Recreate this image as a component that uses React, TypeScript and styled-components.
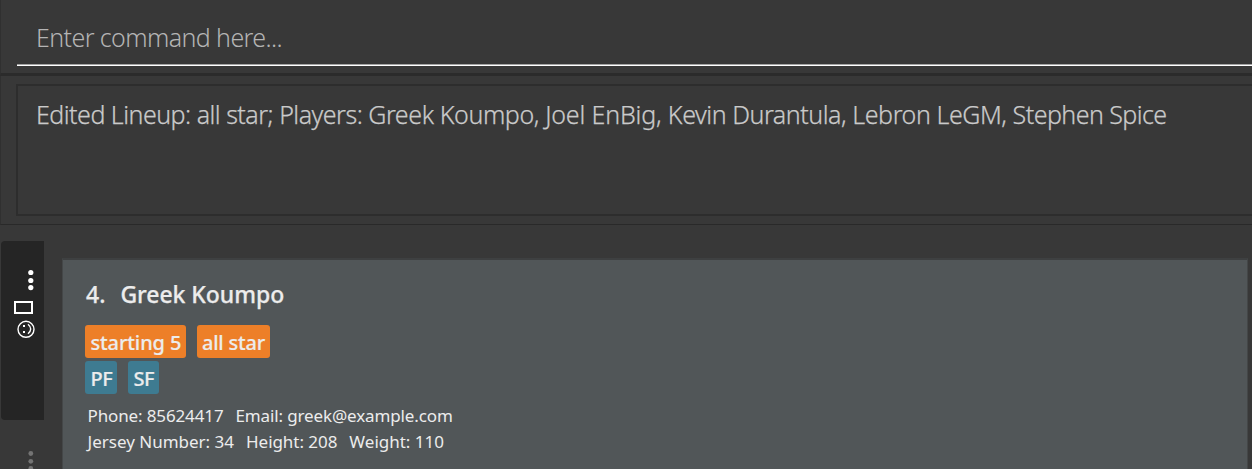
import React from "react";
import styled, { createGlobalStyle } from "styled-components";

const GlobalStyle = createGlobalStyle`
  * { box-sizing: border-box; }
  body {
    margin: 0;
    background: #383838;
    font-family: "Noto Sans", "Open Sans", sans-serif;
    overflow: hidden;
  }
`;

const Window = styled.main`
  width: 1252px;
  height: 469px;
  overflow: hidden;
  display: flex;
  flex-direction: column;
  background: #383838;
`;

const CommandBar = styled.section`
  height: 76px;
  flex: none;
  padding: 9px 0 0 16px;
  border-left: 1px solid #303030;
  border-bottom: 3px solid #2b2b2b;
`;

const CommandField = styled.div`
  height: 57px;
  padding-left: 19px;
  border-bottom: 1px solid #fff;
  box-shadow: inset 0 -1px 0 #a3a3a3;
`;

const Label = styled.span<{
  $size: number;
  $line: number;
  $weight?: number;
  $track?: number;
  $color?: string;
  $stroke?: number;
}>`
  display: inline-block;
  white-space: pre;
  font-size: ${(p) => p.$size}px;
  line-height: ${(p) => p.$line}px;
  font-weight: ${(p) => p.$weight ?? 400};
  letter-spacing: ${(p) => p.$track ?? 0}px;
  color: ${(p) => p.$color ?? "#ececec"};
  -webkit-text-stroke: ${(p) => p.$stroke ?? 0}px currentColor;
`;

const Player = styled.span<{ $track: number }>`
  letter-spacing: ${(p) => p.$track}px;
`;

const ResultPane = styled.section`
  height: 149px;
  flex: none;
  padding: 8px 0 8px 15px;
  border-left: 1px solid #303030;
  border-bottom: 1px solid #292929;
`;

const ResultBox = styled.div`
  height: 132px;
  padding: 10px 0 0 18px;
  border: 2px solid #2d2d2d;
  border-right: 0;
`;

const Body = styled.div`
  flex: 1;
  display: flex;
  align-items: flex-start;
`;

const Sidebar = styled.nav`
  width: 44px;
  margin-top: 16px;
  flex: none;
`;

const Tab = styled.div`
  width: 43px;
  height: 179px;
  margin-left: 1px;
  border-radius: 4px 0 0 4px;
  background: #252525;
`;

const NextTab = styled.div`
  height: 49px;
  margin-left: 1px;
`;

const Card = styled.article`
  width: 1186px;
  height: 212px;
  margin: 33px 0 0 18px;
  padding: 19px 0 0 23px;
  border-top: 2px solid #3e4041;
  border-left: 1px solid #444748;
  border-right: 1px solid #444748;
  background: #515658;
`;

const Title = styled.header`
  display: flex;
  gap: 15px;
  height: 46px;
`;

const TagRow = styled.div`
  display: flex;
  gap: 11px;
  height: 36px;
  margin-left: -0.6px;
`;

const Tag = styled.span<{ $bg: string; $width: number }>`
  width: ${(p) => p.$width}px;
  height: 33px;
  padding-left: 5px;
  border-radius: 3px;
  background: ${(p) => p.$bg};
`;

const Details = styled.div`
  display: flex;
  gap: 12px;
  height: 26px;
  margin-left: 1.5px;
`;

export default function App() {
  return (
    <Window>
      <GlobalStyle />
      <CommandBar>
        <CommandField>
          <Label $size={25} $line={56} $weight={300} $track={-0.6} $color="#b4b4b4">Enter command here...</Label>
        </CommandField>
      </CommandBar>
      <ResultPane>
        <ResultBox>
          <Label $size={25} $line={36} $weight={300} $track={-0.51} $color="#cacaca" $stroke={0.25}>
            {"Edited Lineup: all star; Players: "}
            <Player $track={-0.4}>{"Greek Koumpo, "}</Player>
            <Player $track={-0.16}>{"Joel EnBig, "}</Player>
            <Player $track={-0.45}>{"Kevin Durantula, "}</Player>
            <Player $track={-0.43}>{"Lebron LeGM, "}</Player>
            <Player $track={-0.55}>Stephen Spice</Player>
          </Label>
        </ResultBox>
      </ResultPane>
      <Body>
        <Sidebar>
          <Tab>
            <svg width="43" height="110" viewBox="1 241 43 110" fill="none" stroke="#fff">
              <g fill="#fff" stroke="none">
                <circle cx="30.8" cy="272.5" r="2.6" />
                <circle cx="30.8" cy="280.5" r="2.6" />
                <circle cx="30.8" cy="287.6" r="2.6" />
              </g>
              <rect x="15" y="302" width="17" height="11" strokeWidth="2" />
              <circle cx="26" cy="329.3" r="8" strokeWidth="1.4" />
              <g fill="#fff" stroke="none">
                <rect x="23" y="325" width="2" height="2" />
                <rect x="23" y="331" width="2" height="2" />
              </g>
              <path d="M28 324.3Q33.4 329 28 333.8" strokeWidth="1.4" />
            </svg>
          </Tab>
          <NextTab>
            <svg width="43" height="49" viewBox="1 420 43 49" fill="#747474">
              <circle cx="30.8" cy="453.5" r="2.4" />
              <circle cx="30.8" cy="461.3" r="2.4" />
              <circle cx="30.8" cy="468.5" r="2.4" />
            </svg>
          </NextTab>
        </Sidebar>
        <Card>
          <Title>
            <Label $size={23} $line={30} $weight={500} $stroke={0.25}>4.</Label>
            <Label $size={23} $line={30} $weight={500} $track={-0.05} $stroke={0.25}>Greek Koumpo</Label>
          </Title>
          <TagRow>
            <Tag $bg="#ed7f28" $width={100.5}><Label $size={20} $line={35} $weight={500} $track={-0.1} $stroke={0.2}>starting 5</Label></Tag>
            <Tag $bg="#ed7f28" $width={73}><Label $size={20} $line={35} $weight={500} $track={-0.2} $stroke={0.2}>all star</Label></Tag>
          </TagRow>
          <TagRow>
            <Tag $bg="#3e7b91" $width={32}><Label $size={20} $line={35} $weight={500} $track={-0.3} $stroke={0.2}>PF</Label></Tag>
            <Tag $bg="#3e7b91" $width={31}><Label $size={20} $line={35} $weight={500} $track={-0.3} $stroke={0.2}>SF</Label></Tag>
          </TagRow>
          <Details>
            <Label $size={17} $line={38} $track={-0.13}>Phone: 85624417</Label>
            <Label $size={17} $line={38} $track={-0.13}>Email: greek@example.com</Label>
          </Details>
          <Details>
            <Label $size={17} $line={38}>Jersey Number: 34</Label>
            <Label $size={17} $line={38} $track={-0.05}>Height: 208</Label>
            <Label $size={17} $line={38}>Weight: 110</Label>
          </Details>
        </Card>
      </Body>
    </Window>
  );
}
